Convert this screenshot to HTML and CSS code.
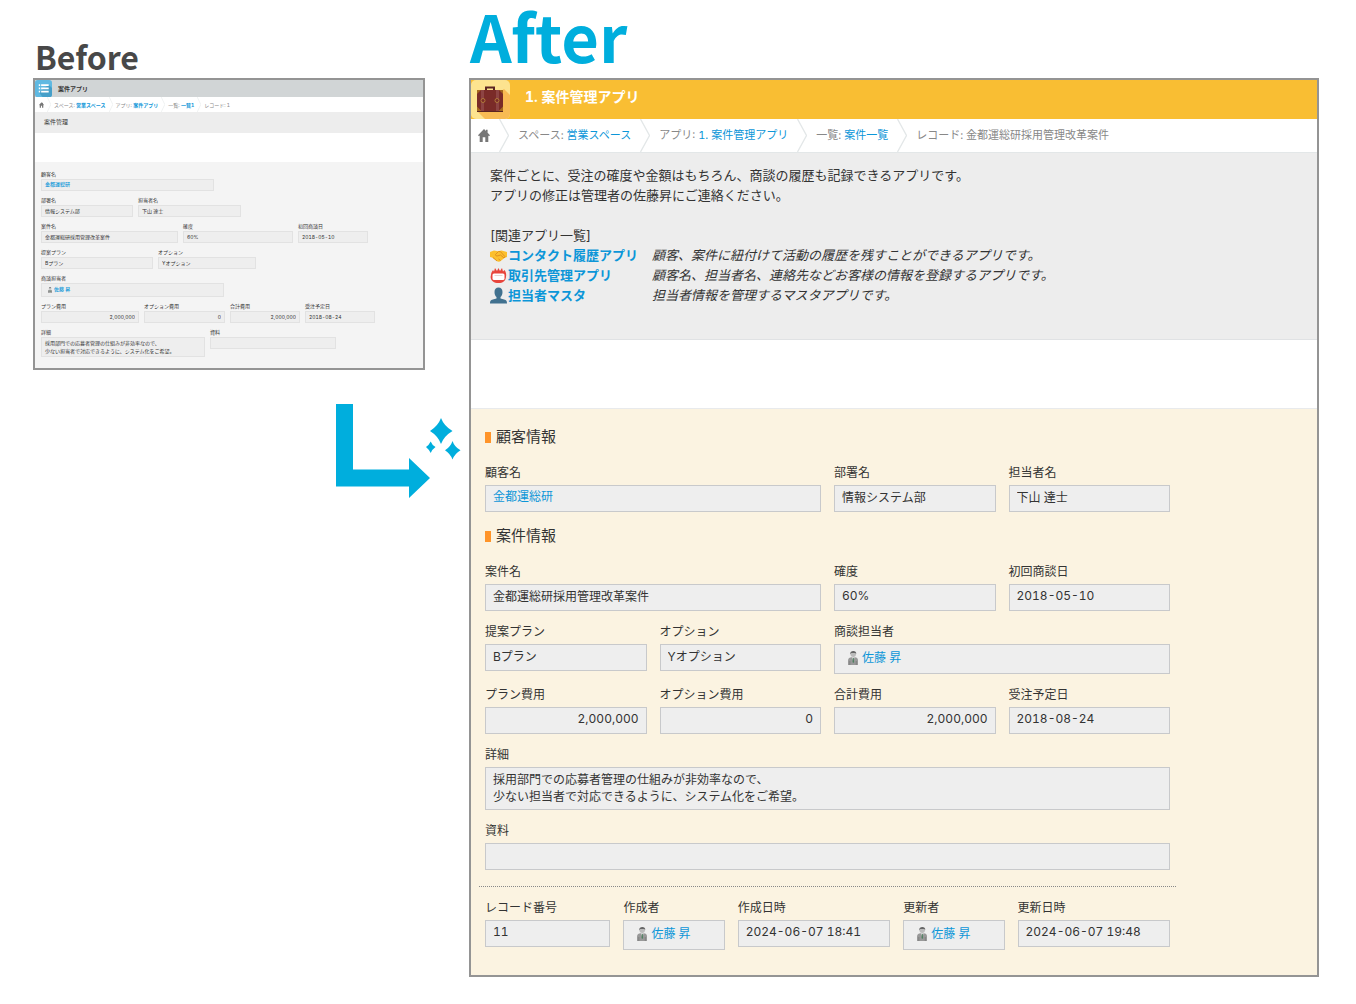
FILE: index.html
```html
<!DOCTYPE html>
<html lang="ja">
<head>
<meta charset="utf-8">
<meta name="viewport" content="width=device-width, initial-scale=1">
<title>案件アプリ Before / After</title>
<link rel="stylesheet" href="styles.css">
</head>
<body>
<svg class="defs" width="0" height="0" aria-hidden="true">
  <symbol id="home" viewBox="0 0 12 13"><path d="M6 0 0 6.2l1 1 .7-.6V13h3V8.2h2.6V13h3V6.6l.7.6 1-1-2.4-2.5V.8H8v1.3z" fill="#777"/></symbol>
  <symbol id="chevron" viewBox="0 0 10 33" preserveAspectRatio="none"><path d="M.5 0l9 16.5-9 16.5" fill="none" stroke="#e3e7e8" stroke-width="1.3"/></symbol>
  <symbol id="person" viewBox="0 0 10 14"><circle cx="5.2" cy="3.2" r="2.7" fill="#bbb"/><path d="M2.2 3.2C2 1 3.600 0 5.300 0s3.300 1 2.900 3.200L7.300 2.100H3.300z" fill="#666"/><path d="M0 14V9.500C0 7.300 1.800 6.300 3.600 6.300h3.200C8.600 6.300 10 7.300 10 9.500V14z" fill="#999"/><path d="M3.800 6.300h3L5.300 9.500z" fill="#ddd"/><path d="M4.900 7h.9l.3 4-.8 1-.8-1z" fill="#4f8060"/><path d="M1.800 10v4M8.300 10v4" stroke="#777" stroke-width=".7"/></symbol>
</svg>

<main class="compare">
  <section class="side">
    <h1 class="side-title">Before</h1>
    <article class="panel before">
      <header class="app-bar">
        <svg class="app-icon" viewBox="0 0 18 18" aria-hidden="true"><rect width="18" height="18" rx="3" fill="#5fb9e2"/><path d="M14.500 5 18 8.500V15a3 3 0 0 1-3 3H8l-4-5z" fill="#459fc9"/><path d="M4 4.500h1.500v1.800H4zM6.500 4.500h8v1.800h-8zM4 8h1.500v1.800H4zM6.500 8h8v1.800h-8zM4 11.500h1.500v1.800H4zM6.500 11.500h8v1.800h-8z" fill="#fff"/></svg>
        <h2 class="app-name">案件アプリ</h2>
      </header>
      <nav class="crumbs" aria-label="案件アプリのパンくず">
        <a class="home" href="#" aria-label="ホーム"><svg><use href="#home"/></svg></a>
        <svg class="chevron"><use href="#chevron"/></svg>
        <span>スペース: <a href="#">営業スペース</a></span>
        <svg class="chevron"><use href="#chevron"/></svg>
        <span>アプリ: <a href="#">案件アプリ</a></span>
        <svg class="chevron"><use href="#chevron"/></svg>
        <span>一覧: <a href="#">一覧1</a></span>
        <svg class="chevron"><use href="#chevron"/></svg>
        <span>レコード: 1</span>
      </nav>
      <div class="about"><p>案件管理</p></div>
      <div class="toolbar"></div>
      <div class="record">
        <div class="row b-one">
          <div class="field"><span class="label">顧客名</span><div class="box"><a href="#">金都運総研</a></div></div>
        </div>
        <div class="row b-two">
          <div class="field"><label for="b-dept">部署名</label><input id="b-dept" class="box" readonly value="情報システム部"></div>
          <div class="field"><label for="b-contact">担当者名</label><input id="b-contact" class="box" readonly value="下山 達士"></div>
        </div>
        <div class="row b-three">
          <div class="field"><label for="b-case">案件名</label><input id="b-case" class="box" readonly value="金都運総研採用管理改革案件"></div>
          <div class="field"><label for="b-prob">確度</label><input id="b-prob" class="box" readonly value="60%"></div>
          <div class="field"><label for="b-first">初回商談日</label><input id="b-first" class="box" readonly value="2018-05-10"></div>
        </div>
        <div class="row b-four">
          <div class="field"><label for="b-plan">提案プラン</label><input id="b-plan" class="box" readonly value="Bプラン"></div>
          <div class="field"><label for="b-option">オプション</label><input id="b-option" class="box" readonly value="Yオプション"></div>
        </div>
        <div class="row b-five">
          <div class="field"><span class="label">商談担当者</span><div class="box user"><svg><use href="#person"/></svg><a href="#">佐藤 昇</a></div></div>
        </div>
        <div class="row b-six">
          <div class="field"><label for="b-pcost">プラン費用</label><input id="b-pcost" class="box number" readonly value="2,000,000"></div>
          <div class="field"><label for="b-ocost">オプション費用</label><input id="b-ocost" class="box number" readonly value="0"></div>
          <div class="field"><label for="b-total">合計費用</label><input id="b-total" class="box number" readonly value="2,000,000"></div>
          <div class="field"><label for="b-due">受注予定日</label><input id="b-due" class="box" readonly value="2018-08-24"></div>
        </div>
        <div class="row b-seven">
          <div class="field"><label for="b-detail">詳細</label><textarea id="b-detail" class="box" readonly rows="2">採用部門での応募者管理の仕組みが非効率なので、
少ない担当者で対応できるように、システム化をご希望。</textarea></div>
          <div class="field"><label for="b-file">資料</label><input id="b-file" class="box" readonly></div>
        </div>
      </div>
    </article>
    <svg class="arrow" viewBox="0 0 125 94" aria-hidden="true"><g fill="#00aedd"><path d="M0 0H17V65.500H73V54L94 74 73 94V82.500H0z"/><path d="M105 14Q108 22 116.500 27 108 32 105 40 102 32 94 27 102 22 105 14z"/><path d="M94.700 37.500Q96 41 99.500 43 96 45.500 94.700 49 93 45.500 90 43 93 41 94.700 37.500z"/><path d="M116.500 37Q118.500 43 124.500 46.300 118.500 50 116.500 55.500 114.500 50 109 46.300 114.500 43 116.500 37z"/></g></svg>
  </section>

  <section class="side">
    <h1 class="side-title big">After</h1>
    <article class="panel after">
      <header class="app-bar">
        <svg class="app-icon" viewBox="0 0 39 39" aria-hidden="true"><rect width="39" height="39" rx="5" fill="#fde38f"/><path d="M33 9l6 6v19a5 5 0 0 1-5 5H14L6 31z" fill="#f8bb54"/><path d="M15 11V7.500h8V11" fill="none" stroke="#5b2422" stroke-width="2"/><rect x="6" y="10" width="26" height="21.500" rx="3" fill="#7a2b28"/><path d="M6 10h4l-4 4zM32 10v4l-4-4zM6 31.500v-5l5 5zM32 31.500v-5l-5 5z" fill="#a4691f"/><path d="M10 10h3v21h-3zM25 10h3v21h-3z" fill="#8d4443"/><circle cx="12" cy="20.500" r="2" fill="#7a2b28" stroke="#b07a3a"/><circle cx="26" cy="20.500" r="2" fill="#7a2b28" stroke="#b07a3a"/><path d="M6 31.500h26" stroke="#5b2422"/></svg>
        <h2 class="app-name">1. 案件管理アプリ</h2>
      </header>
      <nav class="crumbs" aria-label="案件管理アプリのパンくず">
        <a class="home" href="#" aria-label="ホーム"><svg><use href="#home"/></svg></a>
        <svg class="chevron"><use href="#chevron"/></svg>
        <span>スペース: <a href="#">営業スペース</a></span>
        <svg class="chevron"><use href="#chevron"/></svg>
        <span>アプリ: <a href="#">1. 案件管理アプリ</a></span>
        <svg class="chevron"><use href="#chevron"/></svg>
        <span>一覧: <a href="#">案件一覧</a></span>
        <svg class="chevron"><use href="#chevron"/></svg>
        <span>レコード: 金都運総研採用管理改革案件</span>
      </nav>
      <div class="about">
        <p>案件ごとに、受注の確度や金額はもちろん、商談の履歴も記録できるアプリです。<br>アプリの修正は管理者の佐藤昇にご連絡ください。</p>
        <h3>[関連アプリ一覧]</h3>
        <ul class="related">
          <li><a href="#"><svg viewBox="0 0 17 17" aria-hidden="true"><path d="M0 5l4-1.500 4 .8 3.500-.9L17 5v5l-2.500 1-4.500 3.500-2 .2L2 10.500 0 10z" fill="#fcbf2c"/><path d="M5.500 7.500L8.500 4.500l2 .2 4.500 5-1 1.300-3.500-3-2.500.8c-1.500.6-2.700-.3-2.500-1.300zM3 10.500l4 3.500M8.500 12l2 1.500" fill="none" stroke="#dc8a1c" stroke-width=".9"/></svg>コンタクト履歴アプリ</a><em>顧客、案件に紐付けて活動の履歴を残すことができるアプリです。</em></li>
          <li><a href="#"><svg viewBox="0 0 17 17" aria-hidden="true"><path d="M1 8C1 6 2 4.500 3 3l1 1.500L5 1l2 3 1.500-3L10 4l2-3 1 3.500L14.500 3C16 5 16.500 7 16 10c-.6 4-3 6-7.500 6S1 14 .6 10z" fill="#e8453c"/><rect x="2.500" y="6.500" width="12" height="6.500" rx="1.500" fill="#fff"/><path d="M4.500 8.500h8" stroke="#e8d4d2"/></svg>取引先管理アプリ</a><em>顧客名、担当者名、連絡先などお客様の情報を登録するアプリです。</em></li>
          <li><a href="#"><svg viewBox="0 0 17 17" aria-hidden="true"><path d="M4.500 5C4.500 2 6 .5 8.500.5s4 1.500 4 4.500c0 2.500-.8 4-2 5v1.500l4.500 1.300c1.500.5 2 1.500 2 3.700H0c0-2.200.5-3.200 2-3.700l4.500-1.300V10c-1.200-1-2-2.500-2-5z" fill="#41718f"/></svg>担当者マスタ</a><em>担当者情報を管理するマスタアプリです。</em></li>
        </ul>
      </div>
      <div class="toolbar"></div>
      <div class="record">
        <h3 class="group">顧客情報</h3>
        <div class="row">
          <div class="field wide"><span class="label">顧客名</span><div class="box"><a href="#">金都運総研</a></div></div>
          <div class="field"><label for="a-dept">部署名</label><input id="a-dept" class="box" readonly value="情報システム部"></div>
          <div class="field"><label for="a-contact">担当者名</label><input id="a-contact" class="box" readonly value="下山 達士"></div>
        </div>
        <h3 class="group">案件情報</h3>
        <div class="row">
          <div class="field wide"><label for="a-case">案件名</label><input id="a-case" class="box" readonly value="金都運総研採用管理改革案件"></div>
          <div class="field"><label for="a-prob">確度</label><input id="a-prob" class="box" readonly value="60%"></div>
          <div class="field"><label for="a-first">初回商談日</label><input id="a-first" class="box" readonly value="2018-05-10"></div>
        </div>
        <div class="row">
          <div class="field"><label for="a-plan">提案プラン</label><input id="a-plan" class="box" readonly value="Bプラン"></div>
          <div class="field"><label for="a-option">オプション</label><input id="a-option" class="box" readonly value="Yオプション"></div>
          <div class="field wide"><span class="label">商談担当者</span><div class="box user"><svg><use href="#person"/></svg><a href="#">佐藤 昇</a></div></div>
        </div>
        <div class="row">
          <div class="field"><label for="a-pcost">プラン費用</label><input id="a-pcost" class="box number" readonly value="2,000,000"></div>
          <div class="field"><label for="a-ocost">オプション費用</label><input id="a-ocost" class="box number" readonly value="0"></div>
          <div class="field"><label for="a-total">合計費用</label><input id="a-total" class="box number" readonly value="2,000,000"></div>
          <div class="field"><label for="a-due">受注予定日</label><input id="a-due" class="box" readonly value="2018-08-24"></div>
        </div>
        <div class="field"><label for="a-detail">詳細</label><textarea id="a-detail" class="box" readonly rows="2">採用部門での応募者管理の仕組みが非効率なので、
少ない担当者で対応できるように、システム化をご希望。</textarea></div>
        <div class="field"><label for="a-file">資料</label><input id="a-file" class="box" readonly></div>
        <hr>
        <div class="row meta">
          <div class="field"><label for="a-no">レコード番号</label><input id="a-no" class="box" readonly value="11"></div>
          <div class="field"><span class="label">作成者</span><div class="box user"><svg><use href="#person"/></svg><a href="#">佐藤 昇</a></div></div>
          <div class="field"><label for="a-created">作成日時</label><input id="a-created" class="box" readonly value="2024-06-07 18:41"></div>
          <div class="field"><span class="label">更新者</span><div class="box user"><svg><use href="#person"/></svg><a href="#">佐藤 昇</a></div></div>
          <div class="field"><label for="a-updated">更新日時</label><input id="a-updated" class="box" readonly value="2024-06-07 19:48"></div>
        </div>
      </div>
    </article>
  </section>
</main>
</body>
</html>
```

FILE: styles.css
```css
* {
  box-sizing: border-box;
}

body,
h1,
h2,
h3,
p,
ul {
  margin: 0;
  padding: 0;
}

body {
  background: #fff;
  color: #333;
  font-family: Inter, "Noto Sans CJK JP", sans-serif;
  font-variant-numeric: tabular-nums;
}

a {
  color: #0c96d8;
  text-decoration: none;
}

.defs {
  position: absolute;
}

/* Two versions of the same record, next to each other */
.compare {
  display: grid;
  grid-template-columns: minmax(0, 428fr) minmax(0, 850fr);
  gap: 8px;
  padding: 0 37px 24px 33px;
}

.side {
  display: flex;
  flex-direction: column;
}

.side-title {
  padding: 34px 0 0 2px;
  font: 700 32px/44px "Noto Sans CJK JP", sans-serif;
  color: #484848;
}

.side-title.big {
  padding: 0 0 8px 1px;
  font-size: 65px;
  line-height: 70px;
  color: #00aedd;
}

.arrow {
  width: 125px;
  height: 94px;
  margin-top: 34px;
  align-self: flex-end;
}

.panel {
  border: 2px solid #949494;
}

/* Parts shared by both panels */
.app-bar,
.crumbs {
  display: flex;
  align-items: center;
}

.app-name {
  font-weight: 700;
}

.crumbs {
  background: #fff;
  color: #888;
  white-space: nowrap;
  overflow: hidden;
}

.crumbs svg {
  display: block;
  flex: none;
}

.about {
  background: #ededed;
}

.toolbar {
  background: #fff;
}

.record {
  display: flex;
  flex-direction: column;
}

.row {
  display: grid;
  align-items: start;
}

.field {
  display: flex;
  flex-direction: column;
  min-width: 0;
}

.box {
  display: block;
  width: 100%;
  min-width: 0;
  margin: 0;
  border: 1px solid #c8c9cb;
  border-radius: 0;
  background: #eee;
  color: #333;
  font-family: inherit;
  font-size: inherit;
  font-variant-numeric: inherit;
  outline: 0;
  resize: none;
  overflow: hidden;
}

.number {
  text-align: right;
}

.user {
  display: flex;
  align-items: center;
}

/* Small panel */
.before {
  margin-right: 36px;
}

.before .app-bar {
  height: 17px;
  gap: 6px;
  background: #d1d5d6;
}

.before .app-icon {
  width: 17px;
  height: 17px;
}

.before .app-name {
  font-size: 6px;
  line-height: 10px;
}

.before .crumbs {
  height: 15px;
  padding-left: 4px;
  font-size: 5px;
  line-height: 8px;
}

.before .crumbs a {
  font-weight: 700;
}

.before .home svg {
  width: 5px;
  height: 6px;
}

.before .chevron {
  width: 4px;
  height: 15px;
  margin: 0 3px;
}

.before .about {
  padding: 5px 9px 6px;
  font-size: 6px;
  line-height: 10px;
}

.before .toolbar {
  height: 29px;
}

.before .record {
  gap: 5px;
  padding: 8px 6px 11px;
  background: #f4f4f4;
  font-size: 5px;
  line-height: 8px;
}

.before .row {
  gap: 5px;
}

.before .field {
  gap: 1px;
}

.before .box {
  height: 12px;
  padding: 0 3px 1px;
  border-color: #e2e2e2;
  line-height: 9px;
}

.before .box a {
  font-weight: 500;
}

.before .user {
  height: 14px;
  padding-left: 6px;
  gap: 2px;
}

.before .user svg {
  width: 4px;
  height: 6px;
}

.before textarea.box {
  height: 20px;
  padding-top: 1px;
  line-height: 8px;
}

.b-one {
  grid-template-columns: 173px;
}

.b-two {
  grid-template-columns: 92px 103px;
}

.b-three {
  grid-template-columns: 137px 110px 70px;
}

.b-four {
  grid-template-columns: 112px 98px;
}

.b-five {
  grid-template-columns: 183px;
}

.b-six {
  grid-template-columns: 98px 81px 70px 70px;
}

.b-seven {
  grid-template-columns: 164px 126px;
}

/* Large panel */
.after .app-bar {
  gap: 15px;
  background: #f9be33;
  color: #fff;
}

.after .app-icon {
  width: 39px;
  height: 39px;
}

.after .app-name {
  padding-bottom: 6px;
  font-size: 14px;
  line-height: 20px;
}

.after .crumbs {
  height: 33px;
  padding-left: 7px;
  font-size: 11px;
  line-height: 20px;
}

.after .crumbs span {
  padding-bottom: 2px;
}

.after .home svg {
  width: 12px;
  height: 13px;
}

.after .chevron {
  width: 10px;
  height: 33px;
  margin: 0 9px;
}

.after .about {
  padding: 12px 19px 34px;
  border-top: 1px solid #e3e7e8;
  border-bottom: 1px solid #e0e2e4;
  font-size: 13px;
  line-height: 20px;
}

.after .about h3 {
  margin-top: 20px;
  font-size: 13px;
  font-weight: 400;
}

.related {
  list-style: none;
}

.related li {
  display: grid;
  grid-template-columns: 162px 1fr;
}

.related a {
  display: flex;
  align-items: center;
  gap: 1px;
  font-weight: 700;
  white-space: nowrap;
}

.related svg {
  width: 17px;
  height: 17px;
}

.after .toolbar {
  height: 69px;
  border-bottom: 1px solid #e8eaec;
}

.after .record {
  gap: 12px;
  padding: 16px 147px 25px 14px;
  background: #fbf3e1;
  font-size: 12px;
  line-height: 18px;
}

.group {
  display: flex;
  align-items: center;
  gap: 5px;
  margin-bottom: 3px;
  font-size: 15px;
  font-weight: 400;
  line-height: 24px;
}

.group::before {
  content: "";
  width: 6px;
  height: 11px;
  background: #ff9429;
}

.after .row {
  grid-template-columns: repeat(4, minmax(0, 1fr));
  gap: 13px;
}

.after .meta {
  grid-template-columns: 125fr 101fr 152fr 101fr 152fr;
}

.wide {
  grid-column: span 2;
}

.after .field {
  gap: 3px;
}

.after .box {
  height: 27px;
  padding: 0 7px 3px;
  line-height: 22px;
}

.after input.box {
  padding-bottom: 5px;
  line-height: 20px;
}

.after .user {
  height: 30px;
  padding: 0 13px 2px;
  gap: 4px;
}

.after .user svg {
  width: 10px;
  height: 14px;
}

.after textarea.box {
  height: 43px;
  padding-top: 3px;
  line-height: 17px;
}

.after hr {
  width: calc(100% + 12px);
  margin: 4px -6px 0;
  border: 0;
  border-top: 1px dotted #888;
}

@media (max-width: 1000px) {
  .compare {
    grid-template-columns: minmax(0, 1fr);
  }

  .after .record {
    padding-right: 14px;
  }
}
```
